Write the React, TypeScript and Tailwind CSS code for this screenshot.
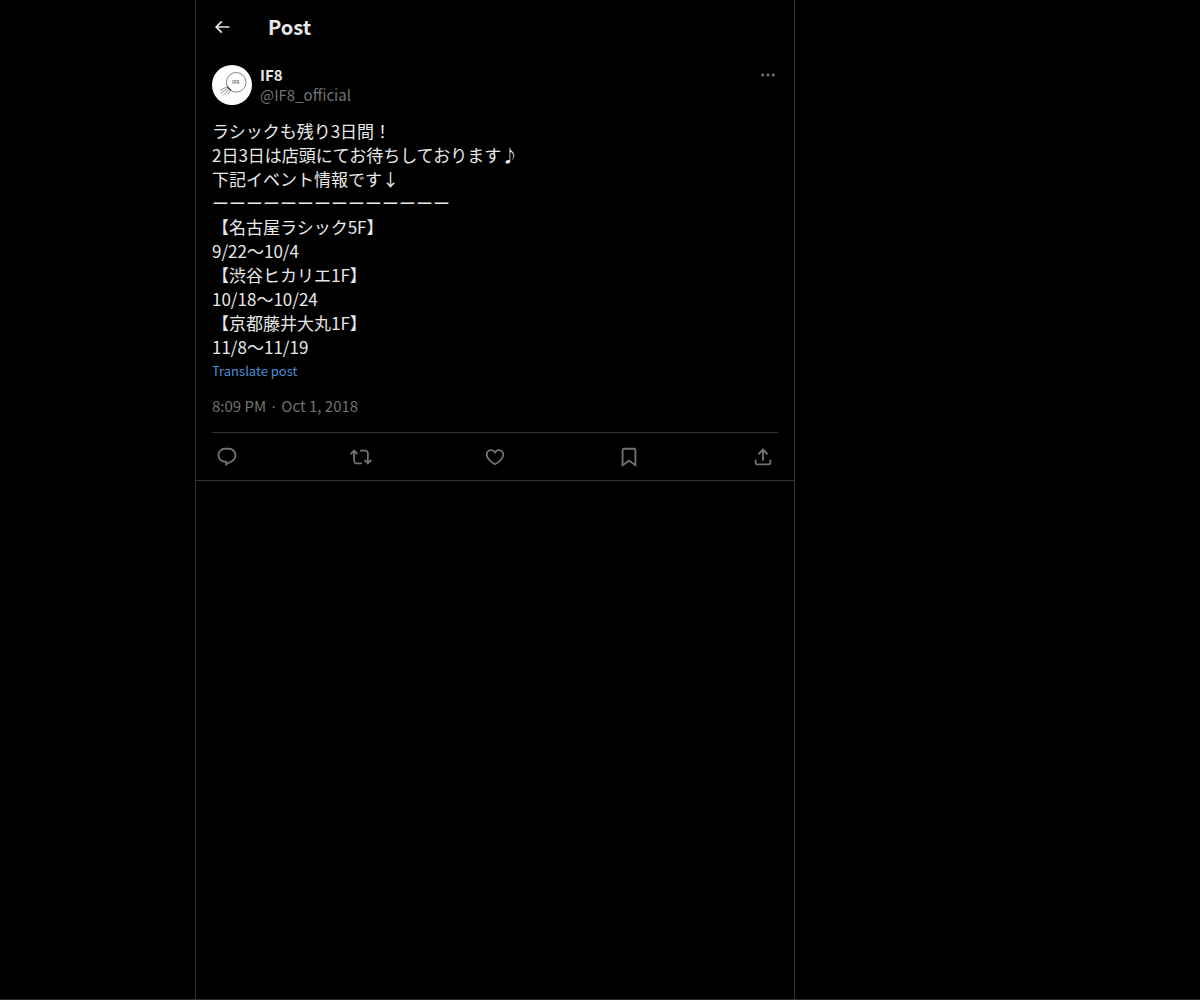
import React from "react";

const paths = {
  back: "M7.414 13l5.043 5.04-1.414 1.42L3.586 12l7.457-7.46 1.414 1.42L7.414 11H21v2H7.414z",
  more: "M3 12c0-1.1.9-2 2-2s2 .9 2 2-.9 2-2 2-2-.9-2-2zm9 2c1.1 0 2-.9 2-2s-.9-2-2-2-2 .9-2 2 .9 2 2 2zm7 0c1.1 0 2-.9 2-2s-.9-2-2-2-2 .9-2 2 .9 2 2 2z",
  reply:
    "M1.751 10c0-4.42 3.584-8 8.005-8h4.366c4.49 0 8.129 3.64 8.129 8.13 0 2.96-1.607 5.68-4.196 7.11l-8.054 4.46v-3.69h-.067c-4.49.1-8.183-3.51-8.183-8.01zm8.005-6c-3.317 0-6.005 2.69-6.005 6 0 3.37 2.77 6.08 6.138 6.01l.351-.01h1.761v2.3l5.087-2.81c1.951-1.08 3.163-3.13 3.163-5.36 0-3.39-2.744-6.13-6.129-6.13H9.756z",
  repost:
    "M4.5 3.88l4.432 4.14-1.364 1.46L5.5 7.55V16c0 1.1.896 2 2 2H13v2H7.5c-2.209 0-4-1.79-4-4V7.55L1.432 9.48.068 8.02 4.5 3.88zM16.5 6H11V4h5.5c2.209 0 4 1.79 4 4v8.45l2.068-1.93 1.364 1.46-4.432 4.14-4.432-4.14 1.364-1.46 2.068 1.93V8c0-1.1-.896-2-2-2z",
  like: "M16.697 5.5c-1.222-.06-2.679.51-3.89 2.16l-.805 1.09-.806-1.09C9.984 6.01 8.526 5.44 7.304 5.5c-1.243.07-2.349.78-2.91 1.91-.552 1.12-.633 2.78.479 4.82 1.074 1.97 3.257 4.27 7.129 6.61 3.87-2.34 6.052-4.64 7.126-6.61 1.111-2.04 1.03-3.7.477-4.82-.561-1.13-1.666-1.84-2.908-1.91zm4.187 7.69c-1.351 2.48-4.001 5.12-8.379 7.67l-.503.3-.504-.3c-4.379-2.55-7.029-5.19-8.382-7.67-1.36-2.5-1.41-4.86-.514-6.67.887-1.79 2.647-2.91 4.601-3.01 1.651-.09 3.368.56 4.798 2.01 1.429-1.45 3.146-2.1 4.796-2.01 1.954.1 3.714 1.22 4.601 3.01.896 1.81.846 4.17-.514 6.67z",
  bookmark:
    "M4 4.5C4 3.12 5.119 2 6.5 2h11C18.881 2 20 3.12 20 4.5v18.44l-8-5.71-8 5.71V4.5zM6.5 4c-.276 0-.5.22-.5.5v14.56l6-4.29 6 4.29V4.5c0-.28-.224-.5-.5-.5h-11z",
  share:
    "M12 2.59l5.7 5.7-1.41 1.42L13 6.41V16h-2V6.41l-3.3 3.3-1.41-1.42L12 2.59zM21 15l-.02 3.51c0 1.38-1.12 2.49-2.5 2.49H5.5C4.11 21 3 19.88 3 18.5V15h2v3.5c0 .28.22.5.5.5h12.98c.28 0 .5-.22.5-.5L19 15h2z",
};

type IconName = keyof typeof paths;

function Icon({ name, className }: { name: IconName; className: string }) {
  return (
    <svg viewBox="0 0 24 24" fill="currentColor" aria-hidden="true" className={className}>
      <path d={paths[name]} />
    </svg>
  );
}

function Avatar() {
  return (
    <span className="relative block size-10 shrink-0 overflow-hidden rounded-full bg-white">
      <svg viewBox="0 0 40 40" className="size-10" aria-hidden="true" fill="none">
        <circle cx="24.2" cy="17.3" r="9.8" stroke="#777" strokeWidth="0.9" />
        <path
          d="M15.5 21.5L8 25.5M16.5 22.5L8.5 28.5M17.5 23.5L11 30.5M18.8 24.8L15.5 29.5"
          stroke="#777"
          strokeWidth="0.8"
        />
        <path d="M15.2 21.6l4 4" stroke="#444" strokeWidth="1.3" />
      </svg>
      <span className="absolute left-5 top-3.5 text-[5px] font-bold leading-[6px] text-[#777]">IF8</span>
    </span>
  );
}

const lines = [
  "ラシックも残り3日間！",
  "2日3日は店頭にてお待ちしております♪",
  "下記イベント情報です↓",
  "ーーーーーーーーーーーーーー",
  "【名古屋ラシック5F】",
  "9/22〜10/4",
  "【渋谷ヒカリエ1F】",
  "10/18〜10/24",
  "【京都藤井大丸1F】",
  "11/8〜11/19",
];

const actions: { name: IconName; label: string }[] = [
  { name: "reply", label: "Reply" },
  { name: "repost", label: "Repost" },
  { name: "like", label: "Like" },
  { name: "bookmark", label: "Bookmark" },
  { name: "share", label: "Share post" },
];

export default function App() {
  return (
    <div className="flex min-h-screen border-b border-[#2f2f2f] bg-black font-['Noto_Sans_CJK_JP',sans-serif] text-[#e8e8e8]">
      <div className="min-w-0 flex-[195]" />
      <main className="w-full max-w-[600px] border-x border-[#333333]">
        <header className="flex h-[53px] items-center px-4">
          <button type="button" aria-label="Back" className="flex w-14 items-center">
            <Icon name="back" className="size-5" />
          </button>
          <h1 className="text-xl font-bold leading-6">Post</h1>
        </header>
        <article className="border-b border-[#333333] px-4 pt-3">
          <div className="flex items-start gap-2">
            <Avatar />
            <div className="min-w-0 flex-1 text-[15px] leading-5">
              <a href="#profile" className="block font-bold">IF8</a>
              <a href="#profile" className="block text-[#727272]">@IF8_official</a>
            </div>
            <button type="button" aria-label="More" className="flex h-5 w-5 items-center justify-center text-[#727272]">
              <Icon name="more" className="size-[18px]" />
            </button>
          </div>
          <p className="mt-3.5 text-[17px] leading-6">
            {lines.map((line) => (
              <span key={line} className="block">{line}</span>
            ))}
          </p>
          <button type="button" className="block text-[13px] leading-6 text-[#4a8fd6]">Translate post</button>
          <div className="mb-4 mt-3 text-[15px] leading-[21px] text-[#727272]">
            <a href="#post">8:09 PM · Oct 1, 2018</a>
          </div>
          <div className="flex h-12 items-center justify-between border-t border-[#333333]">
            {actions.map(({ name, label }) => (
              <button
                key={name}
                type="button"
                aria-label={label}
                className="flex w-[30px] justify-center text-[#727272]"
              >
                <Icon name={name} className="size-[22px]" />
              </button>
            ))}
          </div>
        </article>
      </main>
      <div className="min-w-0 flex-[405]" />
    </div>
  );
}
